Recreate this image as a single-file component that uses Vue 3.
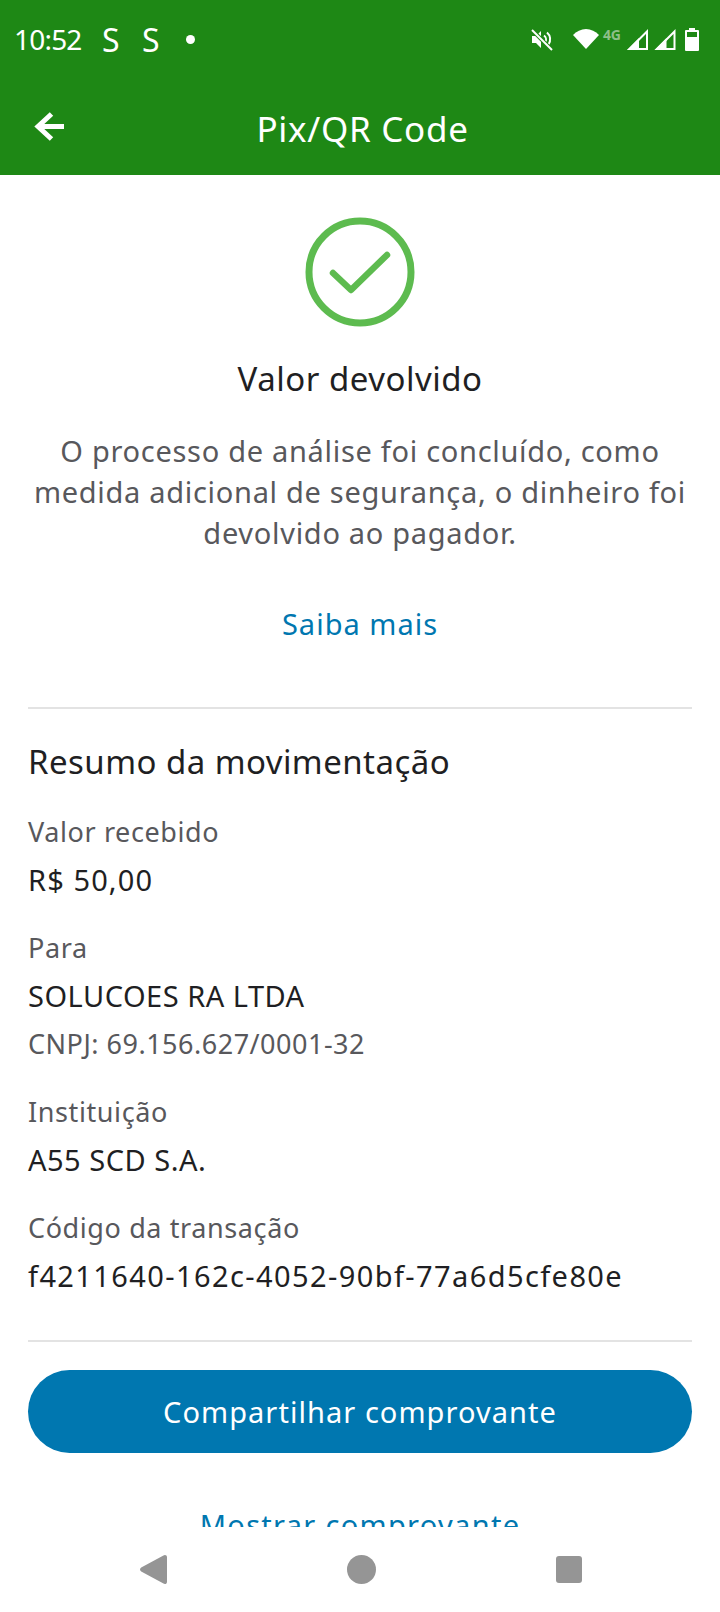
<template>
  <div class="phone">
    <header class="topbar">
      <div class="status-row">
        <div class="status-left">
          <span class="clock">10:52</span>
          <span class="notif">S</span>
          <span class="notif">S</span>
          <span class="dot"></span>
        </div>
        <div class="status-right">
          <svg class="ic-mute" width="22" height="23" viewBox="0 0 22 23">
            <path fill="#fff" d="M1 8h4l5-5v17l-5-5H1z" />
            <path fill="none" stroke="#fff" stroke-width="2" d="M13 7.500a5 5 0 0 1 1 7M16 4.500a9 9 0 0 1 1.500 12" />
            <path stroke="#1e8815" stroke-width="4" d="M1 2l20 20" />
            <path stroke="#fff" stroke-width="2" d="M1 2l20 20" />
          </svg>
          <svg class="ic-wifi" width="26" height="20" viewBox="0 0 26 20"><path fill="#fff" d="M0 6C3.500 2.500 8 0 13 0s9.500 2.500 13 6L13 20z" /></svg>
          <span class="net">4G</span>
          <svg class="ic-signal" width="21" height="21" viewBox="0 0 21 21">
            <path fill="none" stroke="#fff" stroke-width="2" d="M20 2.500V20H2.500z" />
            <path fill="#fff" d="M0 21L12 9v12z" />
          </svg>
          <svg class="ic-signal second" width="22" height="21" viewBox="0 0 21 21">
            <path fill="none" stroke="#fff" stroke-width="2" d="M20 2.500V20H2.500z" />
            <path fill="#fff" d="M0 21L12 9v12z" />
          </svg>
          <svg class="ic-batt" width="14" height="23" viewBox="0 0 14 23">
            <path fill="#fff" d="M4 0h6v2h3a1 1 0 0 1 1 1v19a1 1 0 0 1-1 1H1a1 1 0 0 1-1-1V3a1 1 0 0 1 1-1h3z" />
            <path fill="#1e8815" d="M2 4h10v5H2z" />
          </svg>
        </div>
      </div>
      <div class="nav-row">
        <svg class="back" width="32" height="31" viewBox="0 0 32 31">
          <path fill="none" stroke="#fff" stroke-width="5" d="M31 15.500H6M18.500 3L5 15.500 18.500 28" />
        </svg>
        <h1 class="title">Pix/QR Code</h1>
      </div>
    </header>

    <main class="content">
      <section class="result">
        <svg class="check" width="110" height="110" viewBox="0 0 110 110">
          <circle cx="55" cy="55" r="51" fill="none" stroke="#5dbb4f" stroke-width="7" />
          <path d="M28 56l18 17 36-35" fill="none" stroke="#5dbb4f" stroke-width="6.500" stroke-linecap="round" stroke-linejoin="round" />
        </svg>
        <h2 class="result-title">Valor devolvido</h2>
        <p class="result-text">O processo de análise foi concluído, como medida adicional de segurança, o dinheiro foi devolvido ao pagador.</p>
        <a class="link more">Saiba mais</a>
      </section>

      <section class="summary">
        <h3 class="summary-title">Resumo da movimentação</h3>
        <div v-for="item in rows" :key="item.label" class="field">
          <span class="field-label">{{ item.label }}</span>
          <span class="field-value" :class="item.kind">{{ item.value }}</span>
          <span v-if="item.note" class="field-note">{{ item.note }}</span>
        </div>
      </section>

      <div class="actions">
        <button type="button" class="share">Compartilhar comprovante</button>
        <a class="link show">Mostrar comprovante</a>
      </div>
    </main>

    <footer class="navbar">
      <svg width="27" height="29" viewBox="0 0 27 29"><path fill="#959595" d="M23 .8c1.800-1.500 4-.8 4 1.500v24.400c0 2.300-2.200 3-4 1.500L1.200 16.500c-1.600-1.200-1.600-2.800 0-4z" /></svg>
      <svg width="29" height="29" viewBox="0 0 29 29"><circle cx="14.500" cy="14.500" r="14.500" fill="#959595" /></svg>
      <svg width="26" height="27" viewBox="0 0 26 27"><rect width="26" height="27" rx="3" fill="#959595" /></svg>
    </footer>
  </div>
</template>

<script setup>
const rows = [
  { label: 'Valor recebido', value: 'R$ 50,00', kind: 'numeric' },
  { label: 'Para', value: 'SOLUCOES RA LTDA', note: 'CNPJ: 69.156.627/0001-32' },
  { label: 'Instituição', value: 'A55 SCD S.A.' },
  { label: 'Código da transação', value: 'f4211640-162c-4052-90bf-77a6d5cfe80e', kind: 'code' }
]
</script>

<style>
html, body { margin: 0; background: #fff; }
</style>

<style scoped>
.phone {
  width: 720px; height: 1612px; display: flex; flex-direction: column; overflow: hidden;
  background: #fff; font-family: "Noto Sans", "Open Sans", sans-serif; color: #1f1f23;
}
.topbar { height: 175px; background: #1e8815; color: #fff; flex: none; }
.status-row { height: 78px; display: flex; justify-content: space-between; align-items: center; padding: 0 21px 0 14px; }
.status-left { display: flex; align-items: center; }
.clock { font-size: 28px; width: 88px; letter-spacing: -.8px; }
.notif { font-size: 32px; width: 40px; }
.dot { width: 9px; height: 9px; border-radius: 50%; background: #fff; margin-left: 4px; }
.status-right { display: flex; align-items: center; }
.ic-mute { margin-right: 20px; }
.net { font-size: 14px; font-weight: 700; color: #8ebf89; width: 20px; margin: -10px 4px 0 4px; letter-spacing: -.3px; }
.ic-signal.second { margin-left: 6px; }
.ic-batt { margin-left: 9px; }
.nav-row { height: 97px; display: flex; align-items: center; padding-left: 33px; }
.back { flex: none; }
.title { flex: 1; margin: 0; padding: 4px 60px 0 0; font-size: 35px; font-weight: 400; text-align: center; letter-spacing: .7px; }

.content { flex: 1; min-height: 0; overflow: hidden; padding: 0 28px; }
.result { display: flex; flex-direction: column; align-items: center; text-align: center; border-bottom: 2px solid #e3e3e3; height: 532px; }
.check { margin-top: 42px; flex: none; }
.result-title { margin: 30px 0 0; font-size: 33px; font-weight: 400; line-height: 44px; letter-spacing: .5px; }
.result-text { margin: 29px 0 0; font-size: 29px; line-height: 41px; color: #58585c; letter-spacing: .7px; }
.link { color: #0077b0; font-size: 29px; letter-spacing: 1px; }
.more { margin-top: 51px; line-height: 40px; }

.summary { border-bottom: 2px solid #e3e3e3; height: 600px; padding-top: 31px; }
.summary-title { margin: 0; padding-bottom: 2px; font-size: 33px; font-weight: 400; line-height: 44px; letter-spacing: .45px; }
.field { display: flex; flex-direction: column; margin-top: 27px; }
.field-label { font-size: 27px; line-height: 38px; color: #58585c; letter-spacing: .6px; }
.field-value { font-size: 29px; line-height: 44px; letter-spacing: .5px; margin-top: 7px; }
.field-value.numeric { letter-spacing: 1.1px; }
.field-value.code { letter-spacing: 1.4px; }
.field-note { font-size: 27px; line-height: 36px; color: #58585c; margin-top: 8px; margin-bottom: 4px; letter-spacing: .5px; }

.actions { display: flex; flex-direction: column; align-items: center; }
.share {
  width: 100%; height: 83px; margin-top: 28px; border: 0; border-radius: 42px; flex: none;
  background: #0077b0; color: #fff; font: inherit; font-size: 29px; letter-spacing: 1.05px;
}
.show { margin-top: 52px; line-height: 40px; white-space: nowrap; letter-spacing: 1.3px; }

.navbar { height: 85px; flex: none; background: #fff; display: flex; align-items: center; padding-left: 140px; gap: 180px; }
</style>
